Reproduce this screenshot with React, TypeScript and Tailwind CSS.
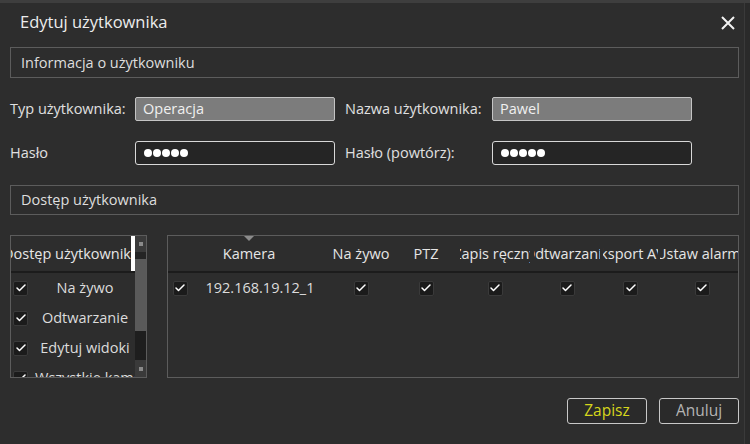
import { Check } from "lucide-react";

const FONT = "font-['Open_Sans','Noto_Sans',sans-serif]";

// kolumny tabeli kamer
const COLUMNS = [
  { label: "", w: "w-[24px]", head: "" },
  { label: "Kamera", w: "w-[136px]", head: "pr-[22px]" },
  { label: "Na żywo", w: "w-[66px]", head: "" },
  { label: "PTZ", w: "w-[64px]", head: "" },
  { label: "Zapis ręczny", w: "w-[74px]", head: "px-[2px]" },
  { label: "Odtwarzanie", w: "w-[70px]", head: "px-[2px]" },
  { label: "Eksport AVI", w: "w-[57px]", head: "px-[1px]" },
  { label: "Ustaw alarmy", w: "w-[86px]", head: "px-[1px]" },
];

const ACCESS = ["Na żywo", "Odtwarzanie", "Edytuj widoki", "Wszystkie kamery"];

function Box() {
  return (
    <span className="w-[15px] h-[15px] shrink-0 rounded-[2px] bg-[#1b1b1b] border border-[#3a3a3a] flex items-center justify-center">
      <Check size={12} strokeWidth={3} className="text-white" />
    </span>
  );
}

function Dots() {
  return (
    <div className="flex gap-[1px]">
      {[0, 1, 2, 3, 4].map((i) => (
        <span key={i} className="w-[8px] h-[8px] rounded-full bg-white" />
      ))}
    </div>
  );
}

export default function App() {
  return (
    <div className={`w-[750px] h-[444px] bg-[#2d2d2d] border-t-[3px] border-[#3e3e3e] flex overflow-hidden ${FONT}`}>
      <div className="flex-1 min-w-0 flex flex-col pl-[10px] pr-[5px]">
        {/* pasek tytułu */}
        <div className="h-[44px] flex items-center justify-between pl-[10px] pr-[4px] pb-[6px]">
          <span className="text-[16.5px] text-[#ececec]">Edytuj użytkownika</span>
          <svg width="14" height="14" viewBox="0 0 14 14" className="mt-[2px]">
            <path d="M1 1L13 13M13 1L1 13" stroke="#f2f2f2" strokeWidth="2" />
          </svg>
        </div>

        {/* informacje */}
        <div className="h-[31px] border border-[#5c5c5c] flex items-center px-[10px] text-[14.5px] text-[#dedede]">
          Informacja o użytkowniku
        </div>

        <div className="mt-[19px] h-[24px] flex items-center text-[14.5px] text-[#e0e0e0]">
          <span className="w-[125px]">Typ użytkownika:</span>
          <div className="w-[200px] h-[24px] rounded-[2px] border border-[#c4c4c4] bg-[#7c7c7c] flex items-center px-[7px] text-[#f0f0f0]">
            Operacja
          </div>
          <span className="ml-[10px] w-[147px]">Nazwa użytkownika:</span>
          <div className="w-[200px] h-[24px] rounded-[2px] border border-[#c4c4c4] bg-[#7c7c7c] flex items-center px-[7px] text-[#f0f0f0]">
            Pawel
          </div>
        </div>

        <div className="mt-[20px] h-[24px] flex items-center text-[14.5px] text-[#e0e0e0]">
          <span className="w-[125px]">Hasło</span>
          <div className="w-[200px] h-[24px] rounded-[3px] border border-[#d8d8d8] bg-[#252525] flex items-center px-[8px]">
            <Dots />
          </div>
          <span className="ml-[10px] w-[147px]">Hasło (powtórz):</span>
          <div className="w-[200px] h-[24px] rounded-[3px] border border-[#d8d8d8] bg-[#252525] flex items-center px-[8px]">
            <Dots />
          </div>
        </div>

        {/* dostęp */}
        <div className="mt-[20px] h-[30px] border border-[#5c5c5c] flex items-center px-[10px] text-[14.5px] text-[#dedede]">
          Dostęp użytkownika
        </div>

        <div className="mt-[20px] h-[143px] flex gap-[20px] min-w-0">
          {/* lista uprawnień */}
          <div className="w-[137px] shrink-0 border border-[#5c5c5c] flex overflow-hidden">
            <div className="flex-1 min-w-0 flex flex-col">
              <div className="h-[37px] shrink-0 flex border-b-2 border-[#1c1c1c]">
                <div className="flex-1 min-w-0 flex items-center justify-center overflow-hidden whitespace-nowrap text-[14.5px] text-[#e6e6e6]">
                  Dostęp użytkownika
                </div>
                <span className="w-[4px] bg-white" />
              </div>
              {ACCESS.map((a) => (
                <div key={a} className="h-[30px] shrink-0 flex items-center pl-[2px]">
                  <Box />
                  <span className="ml-[7px] flex-1 min-w-0 text-center whitespace-nowrap overflow-hidden text-[14.5px] text-[#dcdcdc]">
                    {a}
                  </span>
                </div>
              ))}
            </div>
            {/* pasek przewijania */}
            <div className="w-[11px] shrink-0 flex flex-col bg-[#1f1f1f]">
              <div className="h-[16px] bg-[#3a3a3a] flex items-center justify-center">
                <span className="w-[4px] h-[4px] bg-[#8a8a8a]" />
              </div>
              <div className="h-[7px] bg-[#242424]" />
              <div className="h-[72px] bg-[#5a5a5a]" />
              <div className="flex-1 bg-[#1e1e1e]" />
              <div className="h-[17px] bg-[#3a3a3a] flex items-center justify-center">
                <span className="w-[4px] h-[4px] bg-[#8a8a8a]" />
              </div>
            </div>
          </div>

          {/* tabela kamer */}
          <div className="flex-1 min-w-0 border border-[#5c5c5c] overflow-hidden relative">
            <span className="absolute left-[76px] top-0 w-0 h-0 border-l-[5px] border-r-[5px] border-t-[5px] border-l-transparent border-r-transparent border-t-[#8c8c8c]" />
            <div className="h-[37px] flex border-b-2 border-[#1c1c1c]">
              {COLUMNS.map((c) => (
                <div key={c.label || "chk"} className={`${c.w} ${c.head} shrink-0 flex`}>
                  <div className="flex-1 min-w-0 flex items-center justify-center overflow-hidden whitespace-nowrap text-[14.5px] text-[#e6e6e6]">
                    {c.label}
                  </div>
                </div>
              ))}
            </div>
            <div className="h-[30px] flex items-center">
              {COLUMNS.map((c, i) => (
                <div key={c.label || "chk"} className={`${c.w} shrink-0 flex items-center justify-center text-[14.5px] text-[#dcdcdc]`}>
                  {i === 1 ? "192.168.19.12_1" : <Box />}
                </div>
              ))}
            </div>
          </div>
        </div>

        {/* przyciski */}
        <div className="mt-[20px] flex justify-end gap-[12px] text-[15.5px]">
          <button type="button" className="w-[80px] h-[26px] rounded-[3px] border border-[#c8c8c8] bg-[#2a2a2a] text-[#d6d61c]">
            Zapisz
          </button>
          <button type="button" className="w-[80px] h-[26px] rounded-[3px] border border-[#c8c8c8] bg-[#2a2a2a] text-[#b4b4b4]">
            Anuluj
          </button>
        </div>
      </div>
      <div className="w-[6px] border-l border-[#3a3a3a] bg-[#2a2a2a]" />
    </div>
  );
}
